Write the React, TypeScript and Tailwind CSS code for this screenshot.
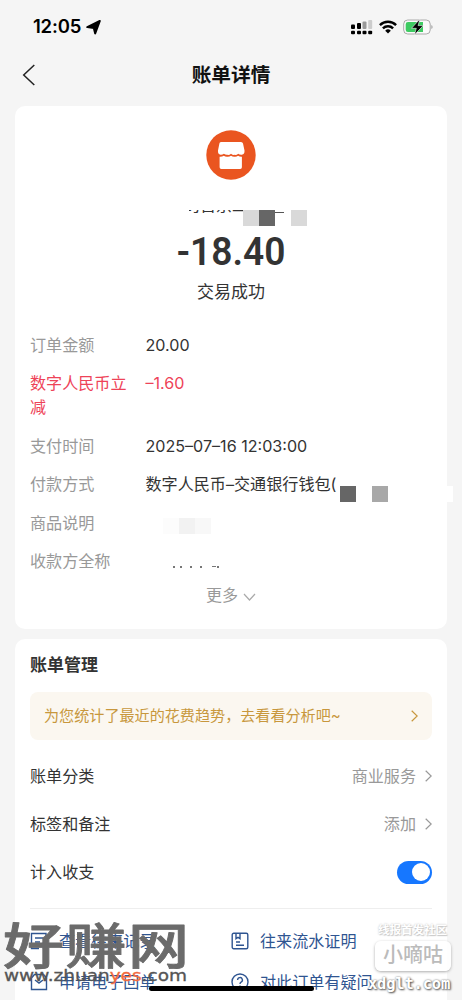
import type { ReactNode } from "react";

type Detail = { label: string; value?: ReactNode; highlight?: boolean };

const details: Detail[] = [
  { label: "订单金额", value: "20.00" },
  { label: "数字人民币立减", value: "–1.60", highlight: true },
  { label: "支付时间", value: "2025–07–16 12:03:00" },
  { label: "付款方式", value: <PayMethod /> },
  { label: "商品说明", value: <BlurredBlocks /> },
  { label: "收款方全称", value: <CoveredName /> }
];

export default function App() {
  return (
    <div className="relative h-[1000px] w-[462px] overflow-hidden bg-[#f5f5f5] font-[Inter,'Noto_Sans_CJK_SC',sans-serif] text-[#333]">
      <StatusBar />
      <NavBar />
      <main className="flex flex-col gap-[10px] px-[15px]">
        <BillCard />
        <ManageCard />
      </main>
      <SiteMark />
      <div className="absolute top-[986px] left-[149px] h-[5px] w-[165px] rounded-full bg-black" />
      <CommunityMark />
    </div>
  );
}

function StatusBar() {
  return (
    <div className="flex h-[54px] items-center justify-between pr-[29px] pl-[33px] text-black">
      <div className="flex items-center gap-[5px]">
        <span className="text-[18.5px] font-semibold tracking-[-0.2px]">12:05</span>
        <svg width="15" height="15" viewBox="0 0 15 15">
          <path d="M13.800 1 9.200 13.400 7.800 7.900 1.300 7.100Z" fill="#000" stroke="#000" strokeWidth="2" strokeLinejoin="round" />
        </svg>
      </div>
      <div className="flex items-center gap-[6px]">
        <svg width="23" height="15" viewBox="0 0 23 15">
          <g fill="#000">
            <rect x="1" y="4.500" width="4" height="4.500" rx="1" />
            <rect x="7" y="3" width="4" height="6" rx="1" />
            <rect x="1" y="10.800" width="4" height="3.500" rx="1" />
            <rect x="7" y="10.800" width="4" height="3.500" rx="1" />
            <rect x="12.500" y="10.800" width="4" height="3.500" rx="1" />
            <rect x="18.200" y="10.800" width="4" height="3.500" rx="1" />
          </g>
          <rect x="12.500" y="1.500" width="4" height="7.500" rx="1" fill="#999" />
          <rect x="18.200" y="0" width="4" height="9" rx="1" fill="#ccc" />
        </svg>
        <svg width="18" height="14" viewBox="0 0 18 14" fill="none" stroke="#000" strokeWidth="2.400">
          <path d="M.9 5.100a11.600 11.600 0 0 1 16.200 0" />
          <path d="M3.900 8.300a7.300 7.300 0 0 1 10.200 0" />
          <path d="M9 13.400 6.200 10.700a4 4 0 0 1 5.600 0Z" fill="#000" stroke="none" />
        </svg>
        <svg width="30" height="16" viewBox="0 0 30 16">
          <rect x=".7" y="1" width="26.500" height="14" rx="4" fill="#fafafa" stroke="#aaa" />
          <path d="M5 3h15v10H5a2.300 2.300 0 0 1-2.300-2.300V5.300A2.300 2.300 0 0 1 5 3Z" fill="#3ecb62" />
          <path d="M28.500 6v4c1.300-.5 1.300-3.500 0-4Z" fill="#888" />
          <path d="m16.900 0-8.400 9.300h4.800L11.500 15.800l8.700-9.200h-5.100Z" fill="#000" stroke="#f5f5f5" strokeWidth=".6" />
        </svg>
      </div>
    </div>
  );
}

function NavBar() {
  return (
    <header className="grid h-[52px] grid-cols-[1fr_auto_1fr] items-center pb-[10px] pl-[22px]">
      <svg width="14" height="22" viewBox="0 0 14 22" fill="none" stroke="#222" strokeWidth="1.500">
        <path d="M12.300 1 1.700 11l10.600 10" />
      </svg>
      <h1 className="mr-[22px] text-[19.7px] leading-[28px] font-semibold text-[#111]">账单详情</h1>
    </header>
  );
}

function BillCard() {
  return (
    <section className="h-[523px] rounded-[10px] bg-white px-[15px] pt-[24px]">
      <div className="flex flex-col items-center">
        <svg width="50" height="50" viewBox="0 0 50 50">
          <circle cx="25" cy="25" r="24.700" fill="#ea5520" />
          <path d="M15 12h20q1.600 0 2 1.600l1.500 7q.3 3.900-2.700 4.200-2.300.2-3.600-1.100-1.700 1.500-3.500 1.100-1.900.4-3.700-1.100-1.700 1.500-3.600 1.100-1.800.3-3.500-1.100-1.500 1.300-3.400 1.100-2.800-.3-2.500-4.200l1.400-7Q13.500 12 15 12Z" fill="#fff" />
          <path d="M13.600 26.800q2.300.2 4.200-1 1.700 1.200 3.600 1 1.900.2 3.600-1 1.800 1.200 3.600 1 1.900.2 3.500-1 1.700 1.200 3.800 1v10.400q0 1.700-1.700 1.700H15.300q-1.700 0-1.700-1.700Z" fill="#fff" />
        </svg>
        <div className="mt-[30px] ml-[32px] flex h-[17px] w-[116px] items-start">
          <div className="flex h-[5px] w-[54px] shrink-0 items-end overflow-hidden text-[16px] leading-[19px] whitespace-nowrap">
            <span className="-ml-[5px]">的百京工</span>
          </div>
          <span className="h-[16px] w-[16px] shrink-0 bg-[#d9d9d9]" />
          <span className="h-[16px] w-[16px] shrink-0 bg-[#666]" />
          <span className="mt-[2px] h-px w-[9px] shrink-0 bg-[#555]" />
          <span className="ml-[7px] h-[16px] w-[16px] shrink-0 bg-[#d9d9d9]" />
        </div>
        <p className="mt-[3px] scale-x-[.94] font-[Roboto,sans-serif] text-[39.500px] leading-[44px] font-semibold">-18.40</p>
        <p className="mt-[6px] text-[17px] leading-[24px]">交易成功</p>
      </div>
      <dl className="mt-[29px] flex flex-col gap-[14.400px] text-[16.1px] leading-[24px]">
        {details.map((item) => (
          <DetailRow key={item.label} {...item} />
        ))}
      </dl>
      <div className="mt-[10px] flex items-center justify-center gap-[5px] text-[16px] leading-[24px] text-[#999]">
        更多
        <svg className="mt-[5px]" width="13" height="9" viewBox="0 0 13 9" fill="none" stroke="#aaa" strokeWidth="1.200">
          <path d="m1 1 5.500 6L12 1" />
        </svg>
      </div>
    </section>
  );
}

function DetailRow({ label, value, highlight }: Detail) {
  return (
    <div className={`flex items-start ${highlight ? "text-[#ee4358]" : ""}`}>
      <dt className={`w-[98px] shrink-0 ${highlight ? "" : "text-[#999]"}`}>{label}</dt>
      <dd className="ml-[17.500px] flex h-[24px] whitespace-nowrap">{value}</dd>
    </div>
  );
}

function PayMethod() {
  return (
    <span className="flex">
      数字人民币–交通银行钱包(
      <span className="mt-[14px] ml-[3.5px] h-[16px] w-[16px] bg-[#666]" />
      <span className="mt-[14px] ml-[16px] h-[16px] w-[16px] bg-[#a8a8a8]" />
      <span className="mt-[14px] ml-[57px] h-[16px] w-[8px] bg-white" />
    </span>
  );
}

function BlurredBlocks() {
  return (
    <span className="mt-[7px] ml-[17px] flex h-[16px]">
      <span className="w-[16px] bg-[#fcfcfc]" />
      <span className="w-[16px] bg-[#f2f2f2]" />
      <span className="w-[16px] bg-[#f8f8f8]" />
    </span>
  );
}

function CoveredName() {
  return (
    <svg className="mt-[16px] ml-[26px]" width="50" height="4" viewBox="0 0 50 4" fill="#777">
      <path d="M1 1h2v2H1ZM8 1h2v2H8ZM18 1h2v2h-2ZM28 1h2v2h-2ZM40 1h4v1h-4ZM45 1h2v2h-2Z" />
    </svg>
  );
}

function ManageCard() {
  return (
    <section className="h-[375px] rounded-t-[10px] bg-white px-[15px] pt-[13px]">
      <h2 className="text-[17px] leading-[26px] font-semibold">账单管理</h2>
      <div className="mt-[14px] flex h-[48px] items-center justify-between rounded-[8px] bg-[#fbf7f0] pr-[14px] pl-[14px] text-[15.100px] text-[#c8973d]">
        <span>为您统计了最近的花费趋势，去看看分析吧~</span>
        <Chevron />
      </div>
      <div className="mt-[12px] text-[16.100px]">
        <SettingRow label="账单分类">
          商业服务
          <Chevron />
        </SettingRow>
        <SettingRow label="标签和备注">
          添加
          <Chevron />
        </SettingRow>
        <SettingRow label="计入收支">
          <span className="flex h-[23px] w-[35px] items-center justify-end rounded-full bg-[#1677ff] pr-[2px]">
            <span className="h-[18px] w-[18px] rounded-full bg-white" />
          </span>
        </SettingRow>
      </div>
      <div className="mt-[12px] grid grid-cols-[201px_200px] gap-y-[17px] border-t border-[#eee] pt-[20px] text-[16.100px] leading-[24px] text-[#2f5591]">
        <LinkItem label="查看往来记录">
          <path d="M16 9V1.500H1.500v15H9M5 6h8M5 10h5M13 10l4 4-4 3" />
        </LinkItem>
        <LinkItem label="往来流水证明">
          <rect x="1.200" y="1.200" width="15.600" height="15.600" rx="1.500" />
          <path d="M5 1.500v5.200l2-1.300 2 1.300V1.500M5 10h4M5 13.200h8" />
        </LinkItem>
        <LinkItem label="申请电子回单">
          <path d="M1.500 5v11.500h15V5M1.500 5l3-3.500h9l3 3.500M5 7l4 3 4-3" />
        </LinkItem>
        <LinkItem label="对此订单有疑问">
          <circle cx="9" cy="9" r="8" />
          <path d="M6.600 7a2.400 2.400 0 1 1 3.500 2.100Q9 9.700 9 11M9 12.500v1.400" />
        </LinkItem>
      </div>
    </section>
  );
}

function SettingRow({ label, children }: { label: string; children: ReactNode }) {
  return (
    <div className="flex h-[48px] items-center justify-between">
      <span>{label}</span>
      <span className="flex items-center gap-[9px] text-[#999]">{children}</span>
    </div>
  );
}

function Chevron() {
  return (
    <svg width="7" height="12" viewBox="0 0 7 12" fill="none" stroke="currentColor" strokeWidth="1.200">
      <path d="m.7.7 5.500 5.300-5.500 5.300" />
    </svg>
  );
}

function LinkItem({ label, children }: { label: string; children: ReactNode }) {
  return (
    <div className="flex items-center gap-[11px] whitespace-nowrap">
      <svg className="shrink-0" width="18" height="18" viewBox="0 0 18 18" fill="none" stroke="currentColor" strokeWidth="1.400">
        {children}
      </svg>
      {label}
    </div>
  );
}

function SiteMark() {
  return (
    <div className="absolute top-[918px] left-[2px]">
      <svg width="190" height="68" viewBox="0 0 190 68">
        <g transform="translate(0 1) scale(1 .8)">
          <text x="1" y="56" textLength="186" className="fill-[#6b6b6b] stroke-[#6b6b6b] stroke-[1] font-['Noto_Sans_CJK_SC',sans-serif] text-[61px] font-medium [stroke-linejoin:round]">
            好赚网
          </text>
        </g>
        <text x="2" y="63" textLength="183" lengthAdjust="spacingAndGlyphs" className="fill-[#555] stroke-[#555] stroke-[.3] font-['DejaVu_Sans',sans-serif] text-[15px]">
          www.zhuan<tspan className="fill-[#f26a3d] stroke-[#f26a3d]">yes</tspan>.com
        </text>
      </svg>
    </div>
  );
}

function CommunityMark() {
  return (
    <div className="absolute top-[921px] left-[364px] flex w-[92px] flex-col items-center">
      <p className="ml-[5px] text-[11.500px] leading-[18px] font-semibold whitespace-nowrap text-white [text-shadow:0_0_2px_#bbb,1px_1px_1px_#ccc]">线报首发社区</p>
      <p className="mt-[2px] ml-[6px] h-[30px] w-[76px] rounded-[6px] bg-white/90 text-center text-[20px] leading-[29px] font-medium whitespace-nowrap text-[#bbb] shadow-[0_1px_3px_#aaa]">小嘀咕</p>
      <p className="mt-[3px] -ml-[2px] font-['DejaVu_Sans_Mono',monospace] text-[15.500px] leading-[20px] font-bold tracking-[-0.2px] text-white [text-shadow:1px_1px_2px_#555,0_0_2px_#777]">xdglt.com</p>
    </div>
  );
}
